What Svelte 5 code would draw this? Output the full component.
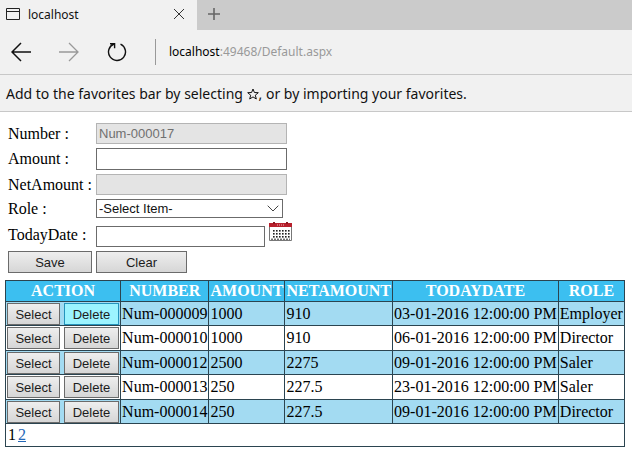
<script>
  const rows = [
    ['Num-000009', '1000', '910', '03-01-2016 12:00:00 PM', 'Employer'],
    ['Num-000010', '1000', '910', '06-01-2016 12:00:00 PM', 'Director'],
    ['Num-000012', '2500', '2275', '09-01-2016 12:00:00 PM', 'Saler'],
    ['Num-000013', '250', '227.5', '23-01-2016 12:00:00 PM', 'Saler'],
    ['Num-000014', '250', '227.5', '09-01-2016 12:00:00 PM', 'Director']
  ];
  const headings = ['ACTION', 'NUMBER', 'AMOUNT', 'NETAMOUNT', 'TODAYDATE', 'ROLE'];
  const dots = [8, 11, 14].flatMap((y) => [4, 7, 10, 13, 16, 19].map((x) => [x, y]));
</script>

<header>
  <div class="tabs">
    <div class="tab">
      <svg width="14" height="12" viewBox="0 0 14 12" fill="none" stroke="#222"><path d="M.5.5h13v11H.5zM.5 3.5h13" /></svg>
      <span>localhost</span>
      <button class="icon" aria-label="Close tab">
        <svg width="12" height="12" viewBox="0 0 12 12" fill="none" stroke="#333"><path d="M1 1l10 10M11 1L1 11" /></svg>
      </button>
    </div>
    <button class="icon plus" aria-label="New tab">
      <svg width="12" height="12" viewBox="0 0 12 12" fill="none" stroke="#666" stroke-width="1.6"><path d="M6 0v12M0 6h12" /></svg>
    </button>
  </div>
  <nav>
    <button class="icon" aria-label="Back">
      <svg width="20" height="20" viewBox="0 0 20 20" fill="none" stroke="#111" stroke-width="1.5"><path d="M20 10H1M10 1l-9 9 9 9" /></svg>
    </button>
    <button class="icon" aria-label="Forward">
      <svg width="20" height="20" viewBox="0 0 20 20" fill="none" stroke="#999" stroke-width="1.3"><path d="M0 10h19M10 1l9 9-9 9" /></svg>
    </button>
    <button class="icon" aria-label="Refresh">
      <svg width="20" height="20" viewBox="0 0 20 20" fill="none" stroke="#111" stroke-width="1.4"><path d="M13.5 2.2A8.5 8.5 0 1 1 7 2M3 1.7h4.6v4.6" /></svg>
    </button>
    <div class="address"><b>localhost</b>:49468/Default.aspx</div>
  </nav>
  <p class="favorites">
    Add to the favorites bar by selecting
    <svg width="12" height="12" viewBox="0 0 12 12" fill="none" stroke="#111"><path d="M6 1l1.4 3.5 3.9.2-3 2.5 1 3.8L6 8.9 2.7 11l1-3.8-3-2.5 3.9-.2z" /></svg>,
    or by importing your favorites.
  </p>
</header>

<main>
  <form onsubmit={(e) => e.preventDefault()}>
    <label for="number">Number :</label>
    <input id="number" type="text" value="Num-000017" disabled />
    <label for="amount">Amount :</label>
    <input id="amount" class="tall" type="text" />
    <label for="net">NetAmount :</label>
    <input id="net" type="text" disabled />
    <label for="role">Role :</label>
    <div class="pick">
      <select id="role"><option>-Select Item-</option></select>
      <svg width="12" height="7" viewBox="0 0 12 7" fill="none" stroke="#444"><path d="M.7.7L6 6 11.3.7" /></svg>
    </div>
    <label for="date">TodayDate :</label>
    <div class="date">
      <input id="date" type="text" />
      <button class="icon" type="button" aria-label="Open calendar">
        <svg width="23" height="19" viewBox="0 0 23 19">
          <path d="M.5 1.5h22v17H.5z" fill="#fff" stroke="#777" />
          <path d="M0 1h23v4H0z" fill="#b8202c" />
          <path d="M4 0h2v2H4zM17 0h2v2h-2z" fill="#8b1820" />
          <path d="M8 3h7" stroke="#ecb5b8" stroke-dasharray="1 1" />
          {#each dots as [x, y]}<rect {x} {y} width="1.6" height="1.6" fill="#222" />{/each}
          <path d="M2 17.2h19" stroke="#333" stroke-dasharray="2 1" />
        </svg>
      </button>
    </div>
    <button class="btn">Save</button>
    <button class="btn clear" type="reset">Clear</button>
  </form>

  <table>
    <thead>
      <tr>{#each headings as h}<th>{h}</th>{/each}</tr>
    </thead>
    <tbody>
      {#each rows as row, i}
        <tr class:alt={i % 2 === 0}>
          <td>
            <div class="actions">
              <button class="btn">Select</button>
              <button class="btn" class:hot={i === 0}>Delete</button>
            </div>
          </td>
          {#each row as cell}<td>{cell}</td>{/each}
        </tr>
      {/each}
      <tr class="pager"><td colspan="6"><span>1</span><a href="#2">2</a></td></tr>
    </tbody>
  </table>
</main>

<style>
  :global(body) { margin: 0; background: #fff; }
  header { font-family: "Noto Sans", "Open Sans", sans-serif; background: #f1f1f1; border-bottom: 1px solid #c8c8c8; color: #111; }
  .icon { border: 0; padding: 0; background: none; display: flex; }
  svg { display: block; }
  .tabs { display: flex; height: 30px; background: #cbcbcb; }
  .tab { display: flex; align-items: center; box-sizing: border-box; width: 197px; padding: 0 12px 2px 6px; background: #f1f1f1; font-size: 12px; line-height: 16px; }
  .tab span { flex: 1; padding: 2px 0 0 8px; }
  .plus { align-items: center; padding: 0 11px 2px; }
  nav { display: flex; align-items: center; gap: 28px; height: 44px; padding-left: 11px; border-bottom: 1px solid #c8c8c8; }
  .address { border-left: 1px solid #999; padding-left: 13px; line-height: 26px; font-size: 12px; color: #999; }
  .address b { font-weight: 400; color: #000; }
  .favorites { margin: 0; padding: 8px 6px 7px; font-size: 14px; line-height: 21px; }
  .favorites svg { display: inline-block; vertical-align: -1px; }

  main { padding: 11px 7px 0 5px; font: 16px/18px "Liberation Serif", "Times New Roman", serif; color: #000; }
  form { display: grid; grid-template-columns: 84px 1fr; grid-template-rows: 21px 22px 21px 19px 25px 22px; gap: 4px; padding-left: 3px; align-items: center; justify-items: start; }
  label { white-space: nowrap; }
  input, select { box-sizing: border-box; width: 191px; height: 21px; margin: 0; padding: 0 2px; border: 1px solid #6b6b6b; border-radius: 0; background: #fff; color: #111; font: 13px "Liberation Sans", Arial, sans-serif; }
  .tall { height: 22px; }
  input:disabled { background: #e4e4e4; border-color: #b4b4b4; color: #707070; }
  .pick { position: relative; }
  select { display: block; width: 187px; height: 19px; appearance: none; }
  .pick svg { position: absolute; right: 4px; top: 6px; pointer-events: none; }
  .date { display: flex; gap: 4px; align-items: flex-start; height: 25px; }
  .date input { width: 169px; align-self: flex-end; }
  .btn { box-sizing: border-box; width: 84px; height: 22px; padding: 0; border: 1px solid #6b6b6b; border-radius: 0; background: linear-gradient(#eee, #d6d6d6); color: #1c1c1c; font: 13px "Liberation Sans", Arial, sans-serif; }
  .clear { width: 91px; }

  table { width: 100%; margin-top: 7px; border-collapse: collapse; border: 1px solid #2b4450; }
  th, td { padding: 1px; border: 1px solid #2b4450; text-align: left; white-space: nowrap; }
  th { height: 18px; background: #3cbff0; color: #fff; text-align: center; }
  .alt { background: #a3dbf2; }
  .alt td { padding-bottom: 0; }
  .actions { display: flex; gap: 4px; }
  .actions .btn { width: 53px; }
  .actions .btn:last-child { width: 55px; }
  .actions .hot { background: #9cf4ff; border-color: #2494bc; }
  .pager span, .pager a { padding: 0 1px; }
  .pager td { height: 20px; }
  a { color: #2468b8; }
</style>
